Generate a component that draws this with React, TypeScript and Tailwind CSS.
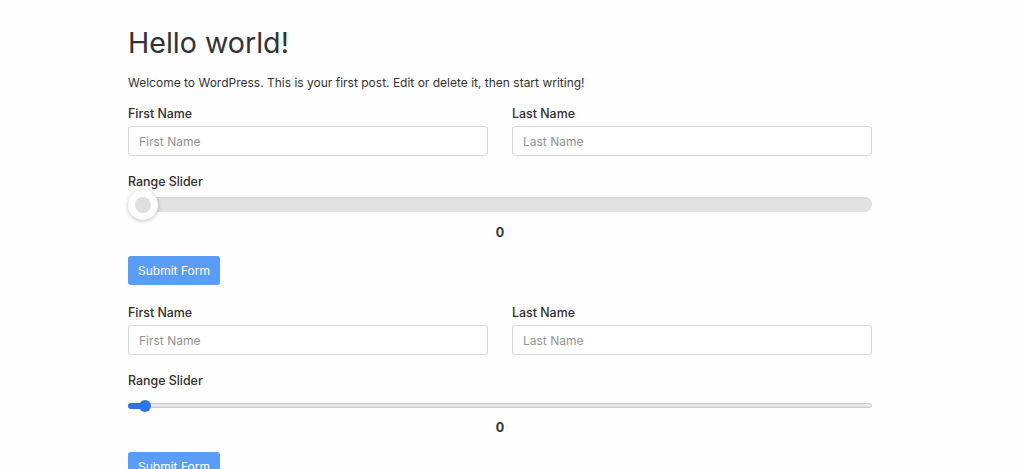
import React from "react";

const font = { fontFamily: "Inter, 'Noto Sans', 'Liberation Sans', sans-serif" };

function NameFields() {
  return (
    <div className="grid grid-cols-2 gap-6">
      <div>
        <label className="block text-[12.4px] leading-5 font-medium text-[#2f2f2f]">First Name</label>
        <input
          placeholder="First Name"
          className="mt-[2px] block h-[30px] w-full rounded-[3px] border border-[#d9d9d9] bg-white px-[10px] text-[12px] text-[#333] placeholder:text-[#939393] outline-none"
        />
      </div>
      <div>
        <label className="block text-[12.4px] leading-5 font-medium text-[#2f2f2f]">Last Name</label>
        <input
          placeholder="Last Name"
          className="mt-[2px] block h-[30px] w-full rounded-[3px] border border-[#d9d9d9] bg-white px-[10px] text-[12px] text-[#333] placeholder:text-[#939393] outline-none"
        />
      </div>
    </div>
  );
}

function SubmitButton() {
  return (
    <button className="h-[29px] w-[92px] rounded-[3px] bg-[#5b9df5] text-[12px] text-white">
      Submit Form
    </button>
  );
}

export default function App() {
  return (
    <div className="min-h-screen bg-[#fefefe] text-[#333]" style={font}>
      <div className="ml-[128px] w-[744px] pt-[24px]">
        <h1 className="text-[28.6px] leading-[38px] font-normal text-[#333]">Hello world!</h1>
        <p className="mt-[11px] text-[12px] leading-5 text-[#333]">
          Welcome to WordPress. This is your first post. Edit or delete it, then start writing!
        </p>

        {/* Form 1 */}
        <div className="mt-[11px]">
          <NameFields />
          <label className="mt-[16px] block text-[12.4px] leading-5 font-medium text-[#2f2f2f]">Range Slider</label>
          <div className="relative mt-[5px] h-[15px] rounded-full bg-[#e2e2e2] shadow-[inset_0_1px_1px_rgba(0,0,0,0.08)]">
            <div className="absolute left-0 top-1/2 flex h-[30px] w-[30px] -translate-y-1/2 items-center justify-center rounded-full bg-white shadow-[0_1px_4px_rgba(0,0,0,0.25)]">
              <div className="h-[16px] w-[16px] rounded-full bg-[#e0e0e0]" />
            </div>
          </div>
          <div className="mt-[11px] text-center text-[12.5px] leading-5 font-bold text-[#333]">0</div>
          <div className="mt-[13px]">
            <SubmitButton />
          </div>
        </div>

        {/* Form 2 */}
        <div className="mt-[18px]">
          <NameFields />
          <label className="mt-[16px] block text-[12.4px] leading-5 font-medium text-[#2f2f2f]">Range Slider</label>
          <div className="relative mt-[12px] h-[5px] rounded-full border border-[#c9c9c9] bg-[#e6e6e6]">
            <div className="absolute left-[-1px] top-1/2 h-[6px] w-[16px] -translate-y-1/2 rounded-full bg-[#2f74e6]" />
            <div className="absolute left-[10px] top-1/2 h-[12px] w-[12px] -translate-y-1/2 rounded-full bg-[#2f74e6]" />
          </div>
          <div className="mt-[10px] text-center text-[12.5px] leading-5 font-bold text-[#333]">0</div>
          <div className="mt-[14px]">
            <SubmitButton />
          </div>
        </div>
      </div>
    </div>
  );
}
